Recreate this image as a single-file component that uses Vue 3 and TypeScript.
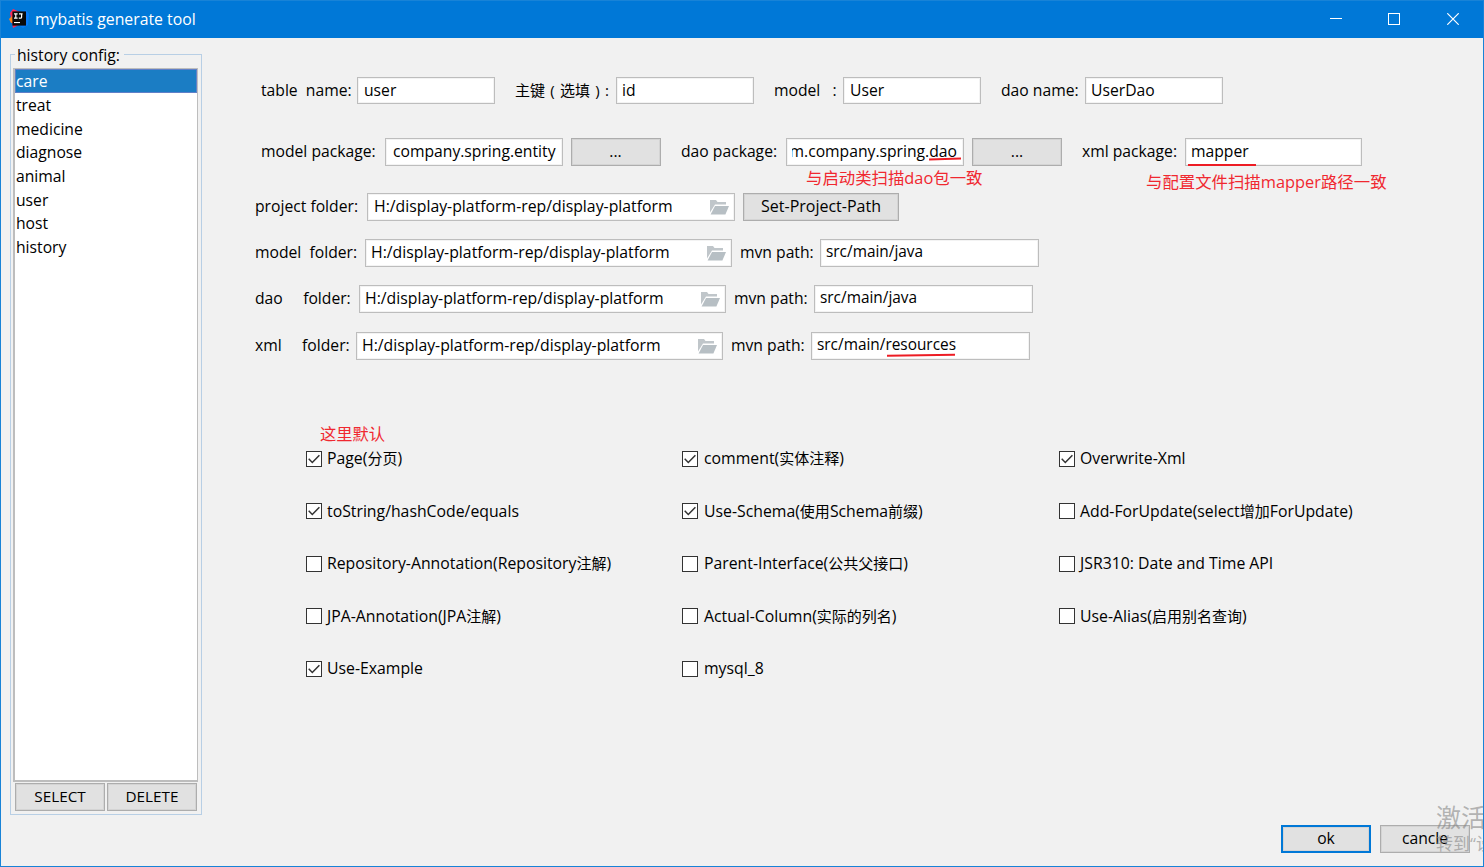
<script setup lang="ts">
import { ref } from 'vue'

interface Option {
  label: string
  checked: boolean
}

const history: string[] = ['care', 'treat', 'medicine', 'diagnose', 'animal', 'user', 'host', 'history']
const selected = ref('care')
const folderPath = 'H:/display-platform-rep/display-platform'

const folders = [
  { key: 'model', label: 'model  folder:', mvn: 'src/main/java', marked: false },
  { key: 'dao', label: 'dao     folder:', mvn: 'src/main/java', marked: false },
  { key: 'xml', label: 'xml     folder:', mvn: 'src/main/resources', marked: true },
]

const options = ref<Option[]>([
  { label: 'Page(分页)', checked: true },
  { label: 'comment(实体注释)', checked: true },
  { label: 'Overwrite-Xml', checked: true },
  { label: 'toString/hashCode/equals', checked: true },
  { label: 'Use-Schema(使用Schema前缀)', checked: true },
  { label: 'Add-ForUpdate(select增加ForUpdate)', checked: false },
  { label: 'Repository-Annotation(Repository注解)', checked: false },
  { label: 'Parent-Interface(公共父接口)', checked: false },
  { label: 'JSR310: Date and Time API', checked: false },
  { label: 'JPA-Annotation(JPA注解)', checked: false },
  { label: 'Actual-Column(实际的列名)', checked: false },
  { label: 'Use-Alias(启用别名查询)', checked: false },
  { label: 'Use-Example', checked: true },
  { label: 'mysql_8', checked: false },
])

// Splits a label into Latin and Han runs so each script gets its own size.
function runs(label: string): { text: string; han: boolean }[] {
  return label
    .split(/([\u4e00-\u9fff]+)/)
    .filter((text) => text.length > 0)
    .map((text) => ({ text, han: /[\u4e00-\u9fff]/.test(text) }))
}
</script>

<template>
  <div class="window">
    <header class="titlebar">
      <svg class="logo" width="20" height="20" viewBox="0 0 20 20">
        <path d="M1 4 L4 0 L11 3 L9 10 L2 9 Z" fill="#fe2857" />
        <path d="M0 10 L3 7 L5 14 L2 14 Z" fill="#fc801d" />
        <path d="M3 13 L10 16 L4 19 Z" fill="#fe2857" />
        <path d="M12 2 L17 1 L20 5 L19 16 L14 19 L9 16 Z" fill="#087cfa" />
        <rect x="3.4" y="2.4" width="13.6" height="14.2" fill="#0a0a0a" />
        <path d="M5 4.8h3.6M6.8 4.8v4.4M5 9.2h3.6M10 4.8h3.6M12.6 4.8v3.4q0 1-1.2 1h-1.6" fill="none" stroke="#fff" stroke-width="1.2" />
        <rect x="5" y="13" width="6" height="1.1" fill="#fff" />
      </svg>
      <span class="title">mybatis generate tool</span>
      <div class="controls">
        <svg width="12" height="12" viewBox="0 0 12 12"><path d="M0 5.5h12" stroke="#fff" /></svg>
        <svg width="12" height="12" viewBox="0 0 12 12"><rect x=".5" y=".5" width="11" height="11" fill="none" stroke="#fff" /></svg>
        <svg width="12" height="12" viewBox="0 0 12 12"><path d="M.3.3l11.4 11.4M11.7.3L.3 11.7" stroke="#fff" stroke-width="1.2" /></svg>
      </div>
    </header>

    <div class="body">
      <aside class="history">
        <div class="legend"><span>history config:</span></div>
        <ul class="list">
          <li v-for="h in history" :key="h" :class="{ active: h === selected }" @click="selected = h">{{ h }}</li>
        </ul>
        <div class="list-actions">
          <button>SELECT</button>
          <button>DELETE</button>
        </div>
      </aside>

      <main class="main">
        <div class="row names">
          <label>{{ 'table  name:' }}</label><div class="field inset">user</div>
          <label class="second key">主键<i>(</i>选填<i>)</i>:</label><div class="field">id</div>
          <label class="second">{{ 'model   :' }}</label><div class="field inset">User</div>
          <label class="second">dao name:</label><div class="field">UserDao</div>
        </div>

        <div class="row packages">
          <label>model package:</label>
          <div class="field"><div class="clip"><span>company.spring.entity</span></div></div>
          <button>...</button>
          <label class="second">dao package:</label>
          <div class="anchor">
            <div class="field"><div class="clip"><span>m.company.spring.dao</span></div></div>
            <svg class="mark mark-dao" width="34" height="4" viewBox="0 0 34 4"><path d="M1 2.6L33 1.5" /></svg>
            <span class="note note-dao">与启动类扫描dao包一致</span>
          </div>
          <button>...</button>
          <label class="second">xml package:</label>
          <div class="anchor">
            <div class="field">mapper</div>
            <svg class="mark mark-xml" width="68" height="4" viewBox="0 0 68 4"><path d="M0 2H68" /></svg>
            <span class="note note-xml">与配置文件扫描mapper路径一致</span>
          </div>
        </div>

        <div class="row folder project">
          <label>project folder:</label>
          <div class="field path inset">
            <span>{{ folderPath }}</span>
            <svg width="19" height="15" viewBox="0 0 19 15"><path d="M0 0h6l1.5 2H16v2.5H5L0 12.5z" fill="#c0c6ca" /><path d="M5 6h14l-3.6 8.5H.6z" fill="#b7bfc4" /></svg>
          </div>
          <button>Set-Project-Path</button>
        </div>

        <div v-for="f in folders" :key="f.key" class="row folder" :class="f.key">
          <label>{{ f.label }}</label>
          <div class="field path">
            <span>{{ folderPath }}</span>
            <svg width="19" height="15" viewBox="0 0 19 15"><path d="M0 0h6l1.5 2H16v2.5H5L0 12.5z" fill="#c0c6ca" /><path d="M5 6h14l-3.6 8.5H.6z" fill="#b7bfc4" /></svg>
          </div>
          <label>mvn path:</label>
          <div class="anchor">
            <div class="field mvn">{{ f.mvn }}</div>
            <svg v-if="f.marked" class="mark mark-res" width="70" height="4" viewBox="0 0 70 4"><path d="M1 2.7L69 1.7" /></svg>
          </div>
        </div>

        <div class="options-note">这里默认</div>
        <div class="options">
          <div v-for="o in options" :key="o.label" class="option" @click="o.checked = !o.checked">
            <svg width="16" height="16" viewBox="0 0 16 16">
              <rect x=".5" y=".5" width="15" height="15" fill="#fff" stroke="#333" />
              <path v-if="o.checked" d="M2.7 7.8L6.3 11.5L13.4 4.2" fill="none" stroke="#333" stroke-width="1.5" />
            </svg>
            <div class="text"><span v-for="(r, i) in runs(o.label)" :key="i" :class="{ han: r.han }">{{ r.text }}</span></div>
          </div>
        </div>
      </main>
    </div>

    <footer class="footer">
      <button class="primary">ok</button>
      <button>cancle</button>
    </footer>

    <div class="watermark">
      <div class="wm-title">激活</div>
      <div class="wm-text">转到“设</div>
    </div>
  </div>
</template>

<style>
body {
  margin: 0;
  overflow: hidden;
}
</style>

<style scoped>
* {
  box-sizing: border-box;
}
.window {
  position: relative;
  display: flex;
  flex-direction: column;
  width: 1484px;
  height: 867px;
  overflow: hidden;
  border: 1px solid #1883d7;
  background: #f1f1f1;
  color: #000;
  font: 15.7px/20px 'Open Sans', 'Noto Sans CJK SC', sans-serif;
  white-space: pre;
}
.titlebar {
  display: flex;
  align-items: center;
  flex: none;
  height: 37px;
  padding: 0 0 2px 8px;
  background: #0078d7;
  color: #fff;
}
.logo {
  margin-right: 6px;
}
.title {
  flex: 1;
  font-size: 15.8px;
}
.controls {
  display: flex;
  margin-right: 24px;
}
.controls svg {
  display: block;
  margin-left: 47px;
}
.controls svg:nth-child(2) {
  margin-left: 46px;
}
.body {
  display: flex;
  flex: none;
  height: 777px;
}
.history {
  display: flex;
  flex-direction: column;
  flex: none;
  width: 192px;
  height: 761px;
  margin: 16px 0 0 9px;
  border: 1px solid #b8cfe5;
  padding: 0 3px 3px 2px;
}
.legend {
  height: 13px;
}
.legend span {
  display: block;
  width: 109px;
  height: 20px;
  margin: -10px 0 0 2px;
  padding-left: 2px;
  background: #f1f1f1;
}
.list {
  flex: none;
  width: 185px;
  height: 714px;
  margin: 0;
  padding: 0;
  border: solid #bdbdbd;
  border-width: 1px 1px 2px 2px;
  background: #fff;
  list-style: none;
}
.list li {
  height: 23.7px;
  padding-left: 1px;
  line-height: 25px;
}
.list .active {
  height: 24px;
  border: 1px solid #6080c8;
  padding-left: 0;
  background: #1b7dc4;
  color: #fff;
  line-height: 23px;
}
.list-actions {
  display: flex;
  gap: 2px;
  margin: 1px 0 0 2px;
}
.list-actions button {
  font-size: 15.3px;
}
button {
  flex: none;
  width: 90px;
  height: 28px;
  padding: 0 0 3px;
  border: 1px solid #adadad;
  background: #e1e1e1;
  color: #000;
  font: inherit;
  box-shadow: inset 0 0 0 1px #d4d4d4;
}
.main {
  flex: none;
  width: 1240px;
  padding-left: 53px;
}
.row {
  display: grid;
  align-items: center;
  height: 28px;
}
.field {
  display: flex;
  align-items: center;
  height: 28px;
  overflow: hidden;
  padding: 0 5px 3px;
  border: 1px solid #bdbdbd;
  background: #fff;
  box-shadow: inset 0 0 0 1px #f3f3f3;
}
.inset {
  padding-left: 6px;
}
.mvn {
  font-size: 15.4px;
}
label {
  padding-bottom: 3px;
}
.second {
  padding-left: 20px;
}
.key i {
  display: inline-block;
  width: 15px;
  font-style: normal;
  text-align: center;
}
.names {
  grid-template-columns: 96px 138px 121px 138px 89px 138px 104px 138px;
  margin: 38px 0 0 6px;
}
.names .field {
  height: 27px;
  margin-top: 1px;
  padding-bottom: 1px;
}
.names label {
  padding-bottom: 1px;
}
.names .key {
  font-size: 15px;
}
.packages {
  grid-template-columns: 124px 177.5px 98.5px 125px 178px 98px 123px 177px;
  margin: 34px 0 0 6px;
}
.packages button {
  margin-left: 8px;
}
.clip {
  display: flex;
  flex: 1;
  justify-content: flex-end;
  min-width: 0;
  overflow: hidden;
  padding-right: 1px;
}
.clip span {
  flex: none;
}
.anchor {
  position: relative;
}
.mark {
  position: absolute;
}
.mark path {
  fill: none;
  stroke: #ed1c24;
  stroke-width: 2;
}
.mark-dao {
  left: 142px;
  top: 19px;
}
.mark-xml {
  left: 3px;
  top: 25px;
}
.mark-res {
  left: 75px;
  top: 21px;
}
.note {
  position: absolute;
  color: #f02830;
  font-size: 16.4px;
}
.note-dao {
  left: 20px;
  top: 30px;
}
.note-xml {
  left: -39px;
  top: 34px;
}
.path {
  justify-content: space-between;
  font-size: 15.8px;
}
.path svg {
  margin-top: 3px;
}
.folder label:nth-child(3) {
  padding-left: 8px;
}
.project {
  grid-template-columns: 112px 368px 164px;
  margin-top: 27px;
}
.project button {
  width: 156px;
  margin-left: 8px;
  font-size: 16px;
}
.model {
  grid-template-columns: 110px 367px 88px 219px;
  margin-top: 18px;
}
.dao {
  grid-template-columns: 104px 367px 88px 219px;
  margin-top: 18px;
}
.xml {
  grid-template-columns: 101px 367px 88px 219px;
  margin-top: 19px;
}
.options-note {
  margin: 64px 0 0 65px;
  color: #f02830;
  font-size: 16.3px;
}
.options {
  display: grid;
  grid-template-columns: 376px 377px 320px;
  grid-auto-rows: 52.5px;
  margin: -1px 0 0 51px;
}
.option {
  display: flex;
  gap: 5px;
}
.option:nth-child(3n + 2) {
  gap: 6px;
}
.option svg {
  flex: none;
  margin-top: 7.9px;
}
.text {
  margin-top: 5.1px;
  font-size: 15.8px;
}
.han {
  font-size: 15px;
}
.footer {
  display: flex;
  gap: 9px;
  justify-content: flex-end;
  margin: 10px 13px 0 0;
}
.primary {
  border: 2px solid #0078d7;
  padding-bottom: 2px;
}
.watermark {
  position: absolute;
  left: 1435px;
  top: 801px;
  color: rgba(135, 135, 135, 0.6);
  pointer-events: none;
}
.wm-title {
  font-size: 25px;
  line-height: 30px;
}
.wm-text {
  font-size: 17px;
  line-height: 24px;
}
</style>
